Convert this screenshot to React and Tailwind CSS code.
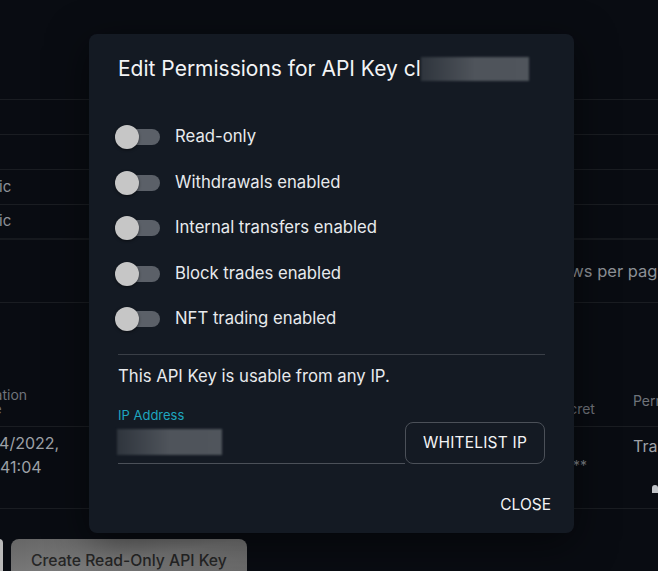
import React from 'react';

const permissions = [
  'Read-only',
  'Withdrawals enabled',
  'Internal transfers enabled',
  'Block trades enabled',
  'NFT trading enabled',
];

function Toggle() {
  return (
    <div className="relative w-[45px] h-6 flex items-center shrink-0">
      <div className="ml-[3px] w-[42px] h-4 rounded-full bg-[#5b6068]" />
      <div className="absolute left-0 top-0 w-6 h-6 rounded-full bg-[#c6c6c6] shadow-[0_1px_3px_rgba(0,0,0,0.5)]" />
    </div>
  );
}

function Blur({ className }) {
  return (
    <div
      className={
        'bg-gradient-to-r from-[#2f353d] via-[#4f545b] to-[#50555c] blur-[1px] ' + className
      }
    />
  );
}

function Backdrop() {
  return (
    <div className="flex flex-col text-[15px] text-[#8d9197]">
      <div className="h-[99px]" />
      <div className="h-[35px] border-t border-[#1a1d22]" />
      <div className="h-[35px] border-t border-[#1a1d22]" />
      <div className="h-[35px] border-t border-[#1a1d22] flex items-center">
        <span className="-ml-[1px]">ic</span>
      </div>
      <div className="h-[34px] border-t border-[#1a1d22] flex items-center">
        <span className="-ml-[1px]">ic</span>
      </div>
      <div className="h-[64px] border-t-2 border-[#16191e] flex items-center justify-end">
        <span className="mr-[-9px] text-[16.5px] whitespace-nowrap">Rows per page</span>
      </div>
      <div className="h-[124px] border-t border-[#1a1d22] flex items-end pb-[10px] text-[14px] leading-[14px] text-[#6f737a]">
        <div className="-ml-[29px] w-[120px]">
          Creation
          <br />
          Date
        </div>
        <div className="ml-auto flex items-end">
          <span className="w-[81px]">Secret</span>
          <span className="mb-[8px] w-[25px]">Perm</span>
        </div>
      </div>
      <div className="h-[82px] border-t border-[#1a1d22] flex pt-[4px] text-[16px] leading-[24px] text-[#9da1a7]">
        <div className="w-[120px] flex flex-col">
          <span className="-ml-[11px]">04/2022,</span>
          <span>41:04</span>
        </div>
        <div className="ml-auto flex">
          <span className="w-[88px] pt-[23px] text-[14px] text-[#7d8187]">******</span>
          <div className="w-[25px] flex flex-col">
            <span className="pt-[3px]">Tra</span>
            <span className="ml-[19px] mt-[27px] w-[6px] h-[8px] rounded-t-full bg-[#bfc2c6]" />
          </div>
        </div>
      </div>
      <div className="border-t border-[#1a1d22] pt-[30px] flex gap-[8px] -ml-[5px]">
        <div className="w-[8px] h-[40px] rounded-md bg-[#b9b9b9]" />
        <button className="h-[40px] px-[20px] rounded-[8px] bg-gradient-to-br from-[#666] via-[#7a7a7a] to-[#6a6a6a] text-[#262626] text-[15.7px] font-medium flex items-start pt-[10px]">
          Create Read-Only API Key
        </button>
      </div>
    </div>
  );
}

export default function App() {
  return (
    <div
      className="relative w-[658px] h-[571px] overflow-hidden bg-[#090c12]"
      style={{ fontFamily: 'Inter, "Noto Sans", sans-serif' }}
    >
      <Backdrop />
      <div className="absolute left-[89px] top-[34px] w-[485px] h-[499px] rounded-[8px] bg-[#141a23] shadow-[0_10px_40px_rgba(0,0,0,0.5)] px-[29px] pt-[22px] flex flex-col">
        <div className="flex items-center h-[26px]">
          <h2 className="text-[21px] leading-[26px] text-[#f3f4f6] font-normal whitespace-nowrap">
            Edit Permissions for API Key cl
          </h2>
          <Blur className="w-[108px] h-[24px]" />
        </div>
        <div className="flex flex-col gap-[21.5px] mt-[43px]">
          {permissions.map((p) => (
            <div key={p} className="flex items-center h-6 -ml-[3px] gap-[15px]">
              <Toggle />
              <span className="text-[16.7px] text-[#e8eaed]">{p}</span>
            </div>
          ))}
        </div>
        <div className="mt-[23px] border-t border-[#3a3f47]" />
        <p className="mt-[9px] text-[16.7px] leading-[24px] text-[#e8eaed]">
          This API Key is usable from any IP.
        </p>
        <div className="mt-[18px] flex items-end gap-0">
          <div className="w-[287px] flex flex-col">
            <label className="text-[13px] leading-[16px] text-[#1ea5bf] pt-[1px]">IP Address</label>
            <div className="h-[41px] pt-[6px] border-b border-[#4b5058]">
              <Blur className="-ml-[1px] w-[105px] h-[26px]" />
            </div>
          </div>
          <button className="w-[140px] h-[42px] rounded-[8px] border border-[#4b5058] text-[15.5px] text-[#f3f4f6] tracking-[0.2px]">
            WHITELIST IP
          </button>
        </div>
        <div className="mt-[29px] flex justify-end">
          <button className="text-[15.5px] text-[#f3f4f6] -mr-[6px]">CLOSE</button>
        </div>
      </div>
    </div>
  );
}
